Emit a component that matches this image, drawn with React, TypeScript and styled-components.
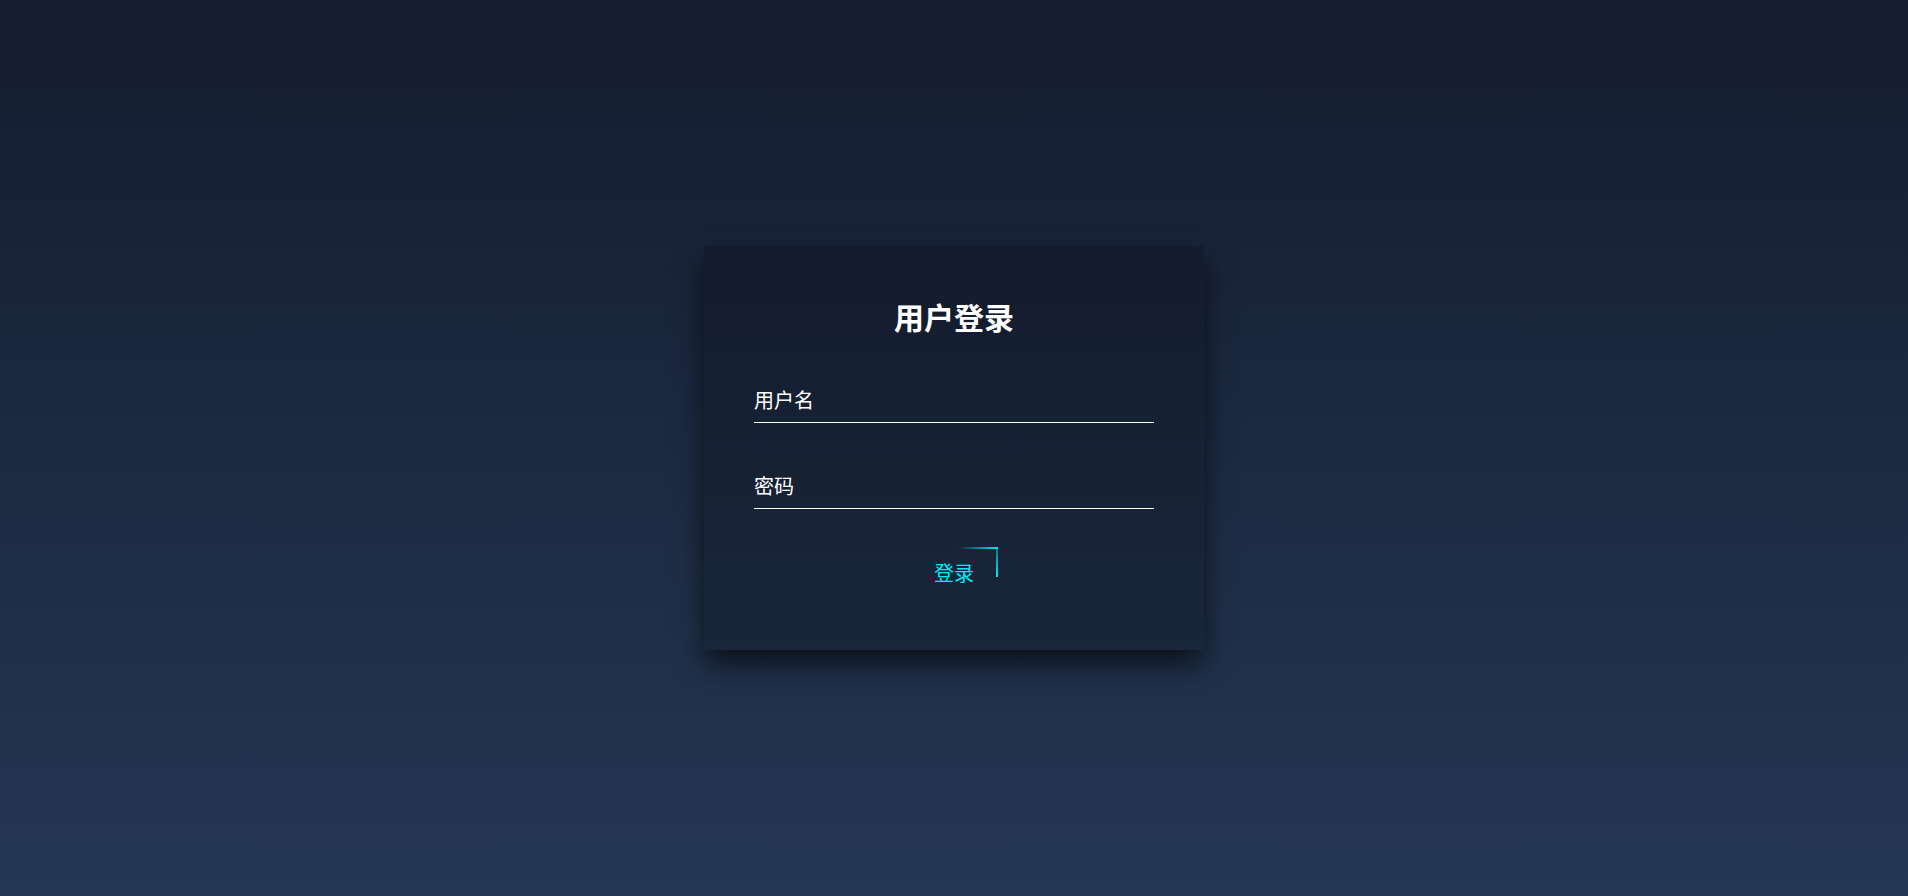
import React from "react";
import styled, { createGlobalStyle } from "styled-components";

const GlobalStyle = createGlobalStyle`
  html, body {
    margin: 0;
    padding: 0;
    height: 100%;
  }
  body {
    font-family: "Noto Sans CJK SC", "Noto Sans", sans-serif;
    background: linear-gradient(to bottom, #141c2e, #243754);
    min-height: 100vh;
  }
  #root {
    min-height: 100vh;
  }
`;

const Page = styled.div`
  min-height: 100vh;
  display: flex;
  align-items: center;
  justify-content: center;
`;

const Card = styled.form`
  width: 500px;
  box-sizing: border-box;
  padding: 50px 50px 53px;
  background: rgba(0, 0, 0, 0.2);
  box-shadow: 0 15px 25px rgba(0, 0, 0, 0.6);
  display: flex;
  flex-direction: column;
`;

const Title = styled.h2`
  margin: 0 0 43px;
  padding: 0;
  font-size: 30px;
  line-height: 40px;
  font-weight: 700;
  color: #fff;
  text-align: center;
`;

const Field = styled.div<{ $gap: number }>`
  position: relative;
  margin-bottom: ${(p) => p.$gap}px;
`;

const Input = styled.input`
  display: block;
  width: 100%;
  box-sizing: border-box;
  height: 44px;
  padding: 10px 0;
  font-size: 20px;
  font-family: inherit;
  color: #fff;
  background: transparent;
  border: none;
  border-bottom: 1px solid #fff;
  outline: none;
`;

const Label = styled.label`
  position: absolute;
  top: 0;
  left: 0;
  padding: 9px 0;
  font-size: 20px;
  line-height: 24px;
  color: #fff;
  pointer-events: none;
`;

const ButtonRow = styled.div`
  display: flex;
  justify-content: center;
`;

const Button = styled.button`
  position: relative;
  overflow: hidden;
  display: inline-block;
  padding: 11px 24px 9px;
  height: 50px;
  box-sizing: border-box;
  font-family: inherit;
  font-size: 20px;
  line-height: 30px;
  letter-spacing: 0;
  color: #03e9f4;
  background: transparent;
  border: none;
  cursor: pointer;
`;

const TopEdge = styled.span`
  position: absolute;
  top: 0;
  left: 0;
  width: 100%;
  height: 2px;
  background: linear-gradient(90deg, transparent 55%, #03e9f4);
`;

const RightEdge = styled.span`
  position: absolute;
  right: 0;
  top: -20px;
  width: 2px;
  height: 100%;
  background: linear-gradient(180deg, transparent, #03e9f4);
`;

export default function App() {
  return (
    <>
      <GlobalStyle />
      <Page>
        <Card onSubmit={(e) => e.preventDefault()}>
          <Title>用户登录</Title>
          <Field $gap={42}>
            <Input type="text" required />
            <Label>用户名</Label>
          </Field>
          <Field $gap={38}>
            <Input type="password" required />
            <Label>密码</Label>
          </Field>
          <ButtonRow>
            <Button type="submit">
              <TopEdge />
              <RightEdge />
              登录
            </Button>
          </ButtonRow>
        </Card>
      </Page>
    </>
  );
}
